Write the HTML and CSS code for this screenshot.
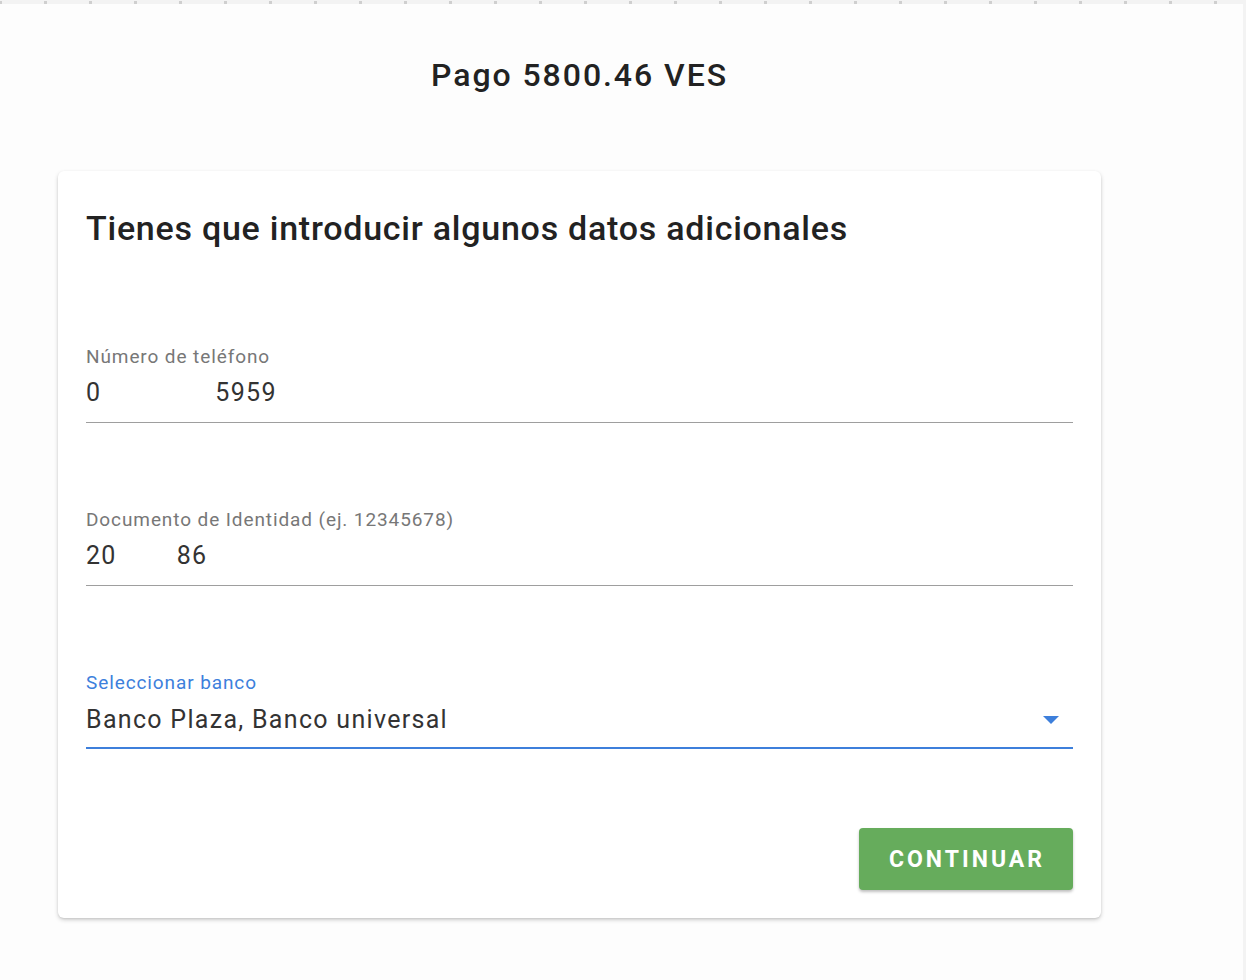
FILE: index.html
```html
<!DOCTYPE html>
<html lang="es">
<head>
<meta charset="utf-8">
<title>Pago</title>
<link rel="stylesheet" href="styles.css">
</head>
<body>
<div class="topstrip"></div>
<div class="page">
  <main class="column">
    <h1 class="pay-title">Pago 5800.46 VES</h1>
    <section class="card">
      <h2 class="card-title">Tienes que introducir algunos datos adicionales</h2>
      <div class="field field-first">
        <label class="field-label">Número de teléfono</label>
        <div class="field-input">0<span class="redact redact-phone"></span>5959</div>
      </div>
      <div class="field">
        <label class="field-label">Documento de Identidad (ej. 12345678)</label>
        <div class="field-input">20<span class="redact redact-doc"></span>86</div>
      </div>
      <div class="field field-focused">
        <label class="field-label">Seleccionar banco</label>
        <div class="field-input select-input">
          <span>Banco Plaza, Banco universal</span>
          <span class="select-arrow"></span>
        </div>
      </div>
      <div class="actions">
        <button class="btn-continue" type="button">CONTINUAR</button>
      </div>
    </section>
  </main>
</div>
</body>
</html>
```
FILE: styles.css
```css
html, body {
  margin: 0;
  padding: 0;
}
body {
  background: #f3f3f3;
  font-family: Roboto, "Liberation Sans", Arial, sans-serif;
  width: 1246px;
  height: 980px;
  overflow: hidden;
}
.topstrip {
  height: 4px;
  background-color: #f3f3f3;
  background-image: repeating-linear-gradient(90deg, #cfcfcf 0px, #cfcfcf 3px, transparent 3px, transparent 45px);
  background-size: 45px 3px;
  background-repeat: repeat-x;
  background-position: -1px 1px;
}
.page {
  display: flow-root;
  background: #fdfdfd;
  margin-right: 3px;
  height: 976px;
}
.column {
  width: 1158px;
  box-sizing: border-box;
  padding: 0 57px 0 58px;
}
.pay-title {
  margin: 53px 0 0;
  text-align: center;
  font-size: 32px;
  line-height: 36px;
  font-weight: 500;
  letter-spacing: 1.95px;
  color: #222;
}
.card {
  margin-top: 78px;
  background: #fff;
  border-radius: 6px;
  box-shadow: 0 2px 4px rgba(0,0,0,0.18), 0 1px 2px rgba(0,0,0,0.08);
  padding: 37px 28px 28px;
}
.card-title {
  margin: 0;
  font-size: 34px;
  line-height: 40px;
  font-weight: 500;
  letter-spacing: 0.75px;
  color: #222;
}
.field {
  display: flex;
  flex-direction: column;
  margin-top: 86px;
}
.field-first {
  margin-top: 98px;
}
.field-label {
  font-size: 19px;
  line-height: 22px;
  letter-spacing: 0.9px;
  color: #777;
}
.field-input {
  margin-top: 10px;
  font-size: 25px;
  line-height: 30px;
  letter-spacing: 1.3px;
  color: #333;
  padding-bottom: 14px;
  border-bottom: 1px solid #9e9e9e;
  display: flex;
  align-items: center;
}
.redact {
  display: inline-block;
  height: 20px;
}
.redact-phone {
  width: 114px;
}
.redact-doc {
  width: 60px;
}
.field-focused .field-label {
  color: #3d80dc;
}
.field-focused .field-input {
  border-bottom: 2px solid #3d7fdb;
  padding-bottom: 12px;
  margin-top: 11px;
}
.select-input {
  justify-content: space-between;
}
.select-arrow {
  width: 0;
  height: 0;
  border-left: 8px solid transparent;
  border-right: 8px solid transparent;
  border-top: 8px solid #3d7fdb;
  margin-right: 14px;
}
.actions {
  display: flex;
  justify-content: flex-end;
  margin-top: 79px;
}
.btn-continue {
  width: 214px;
  height: 62px;
  border: none;
  border-radius: 4px;
  background: #66ac5c;
  color: #fff;
  font-family: Roboto, "Liberation Sans", Arial, sans-serif;
  font-size: 23px;
  font-weight: 700;
  letter-spacing: 3px;
  padding: 0 0 0 2px;
  box-shadow: 0 2px 3px rgba(0,0,0,0.25);
  cursor: pointer;
}
```
